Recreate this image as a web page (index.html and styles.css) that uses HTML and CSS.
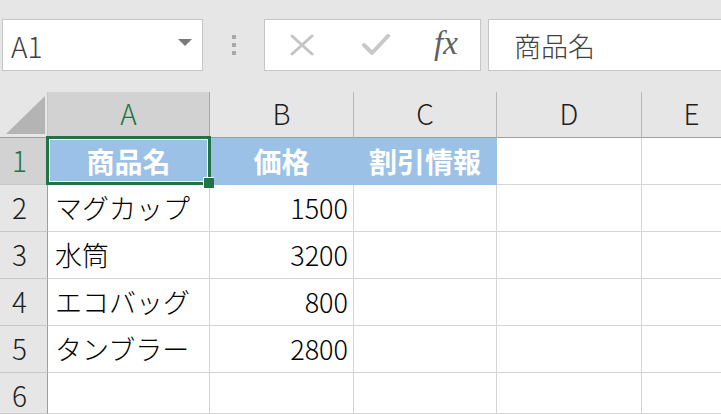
FILE: index.html
```html
<!DOCTYPE html>
<html lang="ja">
<head>
<meta charset="utf-8">
<title>Sheet</title>
<link rel="stylesheet" href="styles.css">
</head>
<body>
<div class="app">
  <div class="toolbar">
    <div class="namebox">
      <span class="namebox-text">A1</span>
      <svg class="dropdown" width="14" height="7" viewBox="0 0 14 7"><polygon points="0,0 14,0 7,7" fill="#7a7a7a"/></svg>
    </div>
    <div class="grip"><span></span><span></span><span></span></div>
    <div class="fxbox">
      <svg class="icon-x" width="24" height="22" viewBox="0 0 24 22"><path d="M2 2 L22 20 M22 2 L2 20" stroke="#c4c4c4" stroke-width="3" fill="none" stroke-linecap="round"/></svg>
      <svg class="icon-check" width="28" height="22" viewBox="0 0 28 22"><path d="M2 11 L10 19 L26 2" stroke="#c8c8c8" stroke-width="4" fill="none" stroke-linecap="round" stroke-linejoin="round"/></svg>
      <span class="fx">fx</span>
    </div>
    <div class="formula"><span class="formula-text">商品名</span></div>
  </div>
  <div class="sheet">
    <div class="corner"><svg width="48" height="46" viewBox="0 0 48 46"><polygon points="45,4 45,42 6,42" fill="#b4b4b4"/></svg></div>
    <div class="colhead sel">A</div>
    <div class="colhead">B</div>
    <div class="colhead">C</div>
    <div class="colhead">D</div>
    <div class="colhead">E</div>

    <div class="rowhead sel">1</div>
    <div class="cell head active">商品名</div>
    <div class="cell head">価格</div>
    <div class="cell head">割引情報</div>
    <div class="cell"></div>
    <div class="cell"></div>

    <div class="rowhead">2</div>
    <div class="cell">マグカップ</div>
    <div class="cell num">1500</div>
    <div class="cell"></div>
    <div class="cell"></div>
    <div class="cell"></div>

    <div class="rowhead">3</div>
    <div class="cell">水筒</div>
    <div class="cell num">3200</div>
    <div class="cell"></div>
    <div class="cell"></div>
    <div class="cell"></div>

    <div class="rowhead">4</div>
    <div class="cell">エコバッグ</div>
    <div class="cell num">800</div>
    <div class="cell"></div>
    <div class="cell"></div>
    <div class="cell"></div>

    <div class="rowhead">5</div>
    <div class="cell">タンブラー</div>
    <div class="cell num">2800</div>
    <div class="cell"></div>
    <div class="cell"></div>
    <div class="cell"></div>

    <div class="rowhead last">6</div>
    <div class="cell"></div>
    <div class="cell"></div>
    <div class="cell"></div>
    <div class="cell"></div>
    <div class="cell"></div>
  </div>
</div>
</body>
</html>
```

FILE: styles.css
```css
* { box-sizing: border-box; }
html, body {
  margin: 0;
  padding: 0;
  width: 721px;
  height: 414px;
  overflow: hidden;
  background: #e6e6e6;
  font-family: "Noto Sans CJK JP", "Noto Sans", sans-serif;
}
.app {
  width: 721px;
  height: 414px;
  overflow: hidden;
}
.toolbar {
  height: 92px;
  padding-top: 19px;
  display: flex;
  align-items: flex-start;
}
.toolbar > * { flex-shrink: 0; }
.namebox {
  margin-left: 2px;
  width: 201px;
  height: 52px;
  background: #fff;
  border: 1px solid #c6c6c6;
  display: flex;
  align-items: center;
  justify-content: space-between;
  padding: 0 10px 0 8px;
}
.namebox-text {
  font-size: 28px;
  font-weight: 300;
  color: #404040;
  line-height: 1;
  padding-top: 1px;
}
.dropdown { display: block; margin-top: -5px; }
.grip {
  width: 61px;
  height: 52px;
  display: flex;
  flex-direction: column;
  align-items: center;
  justify-content: center;
  gap: 4px;
}
.grip span {
  display: block;
  width: 4px;
  height: 4px;
  background: #a8a8a8;
}
.fxbox {
  width: 217px;
  height: 52px;
  background: #fff;
  border: 1px solid #c6c6c6;
  display: flex;
  align-items: center;
  padding-left: 25px;
}
.icon-x { display: block; }
.icon-check { display: block; margin-left: 48px; }
.fx {
  margin-left: 44px;
  font-family: "Liberation Serif", "DejaVu Serif", serif;
  font-style: italic;
  font-size: 33px;
  color: #606060;
  line-height: 1;
  margin-top: -4px;
}
.formula {
  margin-left: 7px;
  width: 260px;
  height: 52px;
  background: #fff;
  border: 1px solid #c6c6c6;
  display: flex;
  align-items: center;
  padding-left: 25px;
}
.formula-text {
  font-size: 27px;
  font-weight: 300;
  color: #404040;
  line-height: 1;
}
.sheet {
  display: grid;
  grid-template-columns: 48px 162px 144px 143px 145px 100px;
  grid-template-rows: 46px repeat(5, 47px) 41px;
  height: 322px;
  overflow: hidden;
}
.corner {
  background: #e6e6e6;
  border-right: 1px solid #c8c8c8;
  border-bottom: 1px solid #9e9e9e;
}
.corner svg { display: block; }
.colhead {
  background: #e6e6e6;
  border-right: 1px solid #b8b8b8;
  border-bottom: 1px solid #9e9e9e;
  display: flex;
  align-items: center;
  justify-content: center;
  font-size: 28px;
  font-weight: 300;
  color: #1e1e1e;
  padding-bottom: 4px;
}
.colhead.sel {
  background: #d2d2d2;
  color: #217346;
  border-right-color: #a8a8a8;
}
.rowhead {
  background: #e6e6e6;
  border-right: 1px solid #9e9e9e;
  border-bottom: 1px solid #c8c8c8;
  display: flex;
  align-items: center;
  justify-content: center;
  font-size: 28px;
  font-weight: 300;
  color: #1e1e1e;
  padding-right: 8px;
  padding-bottom: 2px;
}
.rowhead.last {
  padding-bottom: 0;
  padding-top: 4px;
}
.rowhead.sel {
  background: #d2d2d2;
  color: #217346;
}
.cell {
  background: #fff;
  border-right: 1px solid #d4d4d4;
  border-bottom: 1px solid #d4d4d4;
  display: flex;
  align-items: center;
  padding: 0 6px 1px 7px;
  font-size: 27px;
  font-weight: 300;
  color: #000;
  white-space: nowrap;
  line-height: 1;
}
.cell.num {
  justify-content: flex-end;
  padding-right: 5px;
}
.cell.head {
  background: #9bc2e6;
  border-right-color: #9bc2e6;
  border-bottom-color: #9bc2e6;
  color: #fff;
  font-size: 28px;
  font-weight: 700;
  justify-content: center;
  padding-left: 0;
  padding-right: 0;
}
.cell.active {
  position: relative;
}
.cell.active::after {
  content: "";
  position: absolute;
  left: -2px;
  top: -2px;
  right: -2px;
  bottom: -1px;
  border: 3px solid #217346;
  box-shadow: inset 0 0 0 1px #fff;
  pointer-events: none;
}
.cell.active::before {
  content: "";
  position: absolute;
  right: -5px;
  bottom: -4px;
  width: 10px;
  height: 10px;
  background: #217346;
  border-left: 1px solid #fff;
  border-top: 1px solid #fff;
  z-index: 2;
}
```
